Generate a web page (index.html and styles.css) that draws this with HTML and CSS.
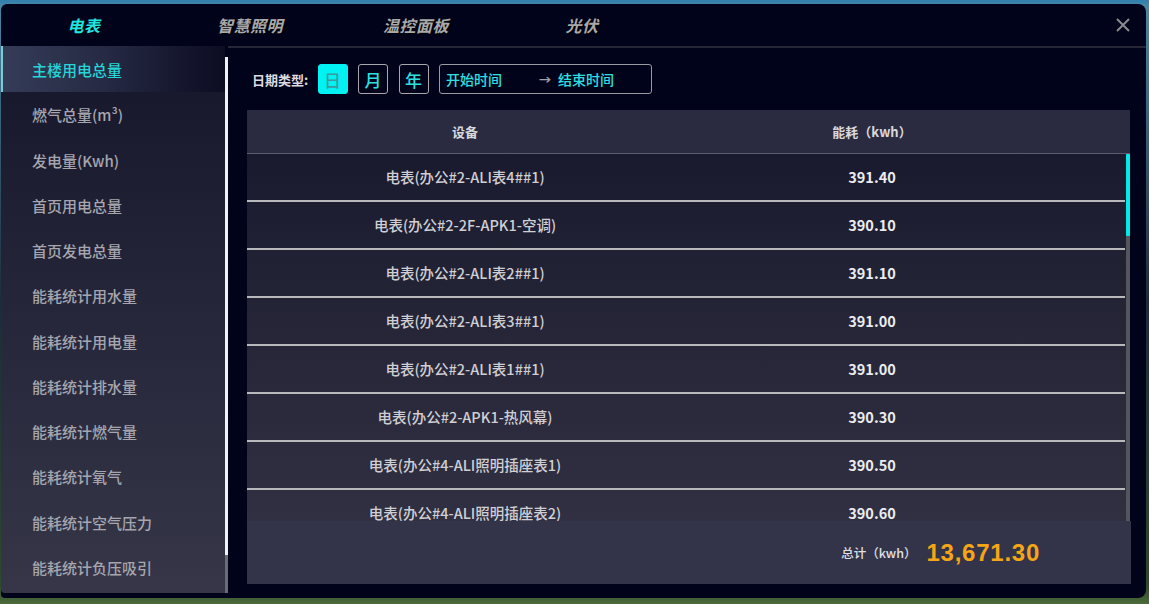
FILE: index.html
```html
<!DOCTYPE html>
<html lang="zh-CN">
<head>
<meta charset="utf-8">
<title>能耗统计</title>
<link rel="stylesheet" href="styles.css">
</head>
<body>
<div class="page">
  <div class="modal">
    <div class="header">
      <div class="tab active">电表</div>
      <div class="tab">智慧照明</div>
      <div class="tab">温控面板</div>
      <div class="tab">光伏</div>
      <div class="close">
        <svg width="14" height="14" viewBox="0 0 14 14"><path d="M1 1 L13 13 M13 1 L1 13" stroke="#8a8a8e" stroke-width="2" fill="none"/></svg>
      </div>
    </div>
    <div class="body">
      <div class="side">
        <div class="menu">
          <div class="item active">主楼用电总量</div>
          <div class="item">燃气总量(m³)</div>
          <div class="item">发电量(Kwh)</div>
          <div class="item">首页用电总量</div>
          <div class="item">首页发电总量</div>
          <div class="item">能耗统计用水量</div>
          <div class="item">能耗统计用电量</div>
          <div class="item">能耗统计排水量</div>
          <div class="item">能耗统计燃气量</div>
          <div class="item">能耗统计氧气</div>
          <div class="item">能耗统计空气压力</div>
          <div class="item">能耗统计负压吸引</div>
        </div>
        <div class="side-scroll"><div class="side-thumb"></div></div>
      </div>
      <div class="main">
        <div class="filters">
          <span class="flabel">日期类型:</span>
          <span class="dbtn on">日</span>
          <span class="dbtn">月</span>
          <span class="dbtn">年</span>
          <div class="range">
            <span class="rtext">开始时间</span>
            <span class="arrow">→</span>
            <span class="rtext">结束时间</span>
          </div>
        </div>
        <div class="table">
          <div class="thead">
            <div class="cell">设备</div>
            <div class="cell">能耗（kwh）</div>
          </div>
          <div class="tbody">
            <div class="rows">
              <div class="row"><div class="cell name">电表(办公#2-ALI表4##1)</div><div class="cell val">391.40</div></div>
              <div class="row"><div class="cell name">电表(办公#2-2F-APK1-空调)</div><div class="cell val">390.10</div></div>
              <div class="row"><div class="cell name">电表(办公#2-ALI表2##1)</div><div class="cell val">391.10</div></div>
              <div class="row"><div class="cell name">电表(办公#2-ALI表3##1)</div><div class="cell val">391.00</div></div>
              <div class="row"><div class="cell name">电表(办公#2-ALI表1##1)</div><div class="cell val">391.00</div></div>
              <div class="row"><div class="cell name">电表(办公#2-APK1-热风幕)</div><div class="cell val">390.30</div></div>
              <div class="row"><div class="cell name">电表(办公#4-ALI照明插座表1)</div><div class="cell val">390.50</div></div>
              <div class="row"><div class="cell name">电表(办公#4-ALI照明插座表2)</div><div class="cell val">390.60</div></div>
            </div>
            <div class="tscroll"><div class="tthumb"></div></div>
          </div>
          <div class="tfoot">
            <span class="tlabel">总计（kwh）</span>
            <span class="total">13,671.30</span>
          </div>
        </div>
      </div>
    </div>
  </div>
</div>
</body>
</html>
```
FILE: styles.css
```css
* { box-sizing: border-box; }
html, body { margin: 0; padding: 0; }
body {
  width: 1149px;
  height: 604px;
  overflow: hidden;
  font-family: "Noto Sans CJK SC", "Noto Sans", sans-serif;
  background: linear-gradient(to bottom, #2f7fae 0px, #4a86a6 6px, #1d2c3a 50%, #2d4a2c 97%, #4c6a3a 100%);
}
.page {
  width: 1149px;
  height: 604px;
  padding: 4px 3px 6px 1px;
}
.modal {
  width: 100%;
  height: 100%;
  background: #01031a;
  border-radius: 6px 8px 8px 4px;
  display: flex;
  flex-direction: column;
  overflow: hidden;
}
.header {
  height: 42px;
  flex: none;
  display: flex;
  align-items: center;
}
.tab {
  width: 166px;
  text-align: center;
  font-size: 16px;
  font-weight: 700;
  font-style: italic;
  letter-spacing: 0.5px;
  color: #a9a9ab;
  text-shadow: 1px 1px 1px #000;
}
.tab.active {
  color: #1fe6e2;
}
.close {
  margin-left: auto;
  margin-right: 16px;
  width: 14px;
  height: 14px;
  display: flex;
}
.body {
  flex: 1;
  display: flex;
  min-height: 0;
}
.side {
  width: 227px;
  flex: none;
  display: flex;
  height: 547px;
}
.menu {
  width: 224px;
  height: 547px;
  padding-top: 1px;
  background: linear-gradient(to bottom, #16162a 0%, #25253a 45%, #363648 100%);
  border-bottom-left-radius: 4px;
}
.item {
  height: 45.25px;
  display: flex;
  align-items: center;
  padding-left: 31px;
  font-size: 15px;
  font-weight: 500;
  color: #a6a6ae;
}
.item.active {
  color: #25d6d6;
  background: linear-gradient(to right, #353c58 0%, #262a44 45%, #0c0c22 100%);
  border-left: 2px solid #7fc9d4;
  padding-left: 29px;
  margin-top: -1px;
  height: 46.25px;
}
.side-scroll {
  width: 3px;
  margin-top: 11px;
  height: 536px;
  background: #6b6b72;
}
.side-thumb {
  height: 498px;
  background: #f2f2f2;
}
.main {
  flex: 1;
  border-top: 2px solid #262636;
  padding: 16px 15px 0 19px;
  display: flex;
  flex-direction: column;
}
.filters {
  display: flex;
  align-items: center;
  height: 30px;
  gap: 10.5px;
  padding-left: 5px;
}
.flabel {
  font-size: 13px;
  font-weight: 700;
  color: #dcdce0;
  width: 55px;
  white-space: nowrap;
}
.dbtn {
  width: 30px;
  height: 30px;
  border: 1.5px solid #a8a8ac;
  border-radius: 3px;
  display: flex;
  align-items: center;
  justify-content: center;
  font-size: 17px;
  font-weight: 500;
  color: #2ee0e0;
}
.dbtn.on {
  background: #00f2f2;
  border-color: #00f2f2;
  color: #3a9aa0;
}
.range {
  width: 213px;
  height: 30px;
  border: 1.5px solid #9a9aa0;
  border-radius: 3px;
  display: flex;
  align-items: center;
  padding-left: 6px;
}
.rtext {
  font-size: 14px;
  font-weight: 500;
  color: #2ee0e0;
}
.arrow {
  color: #a0a0a6;
  font-size: 12px;
  font-weight: 700;
  margin: 0 7px 0 37px;
}
.table {
  margin-top: 16px;
  width: 884px;
  display: flex;
  flex-direction: column;
}
.thead {
  width: 883px;
  height: 44px;
  background: #2a2b40;
  border-bottom: 1px solid #5c5c6c;
  display: grid;
  grid-template-columns: 436px 378px 1fr;
  align-items: center;
}
.cell {
  text-align: center;
}
.thead .cell {
  font-size: 13px;
  font-weight: 700;
  color: #d8d8dc;
}
.tbody {
  height: 367px;
  display: flex;
  overflow: hidden;
  background: linear-gradient(to bottom, #1a1a2f 0%, #262638 50%, #303042 100%);
  width: 883px;
}
.rows {
  width: 878px;
  flex: none;
}
.row {
  height: 48px;
  flex: none;
  border-bottom: 2px solid #b9b9bc;
  display: grid;
  grid-template-columns: 436px 378px 1fr;
  align-items: center;
  padding-bottom: 2px;
}
.name {
  font-size: 14.5px;
  font-weight: 500;
  color: #cfcfd4;
}
.val {
  font-size: 14.5px;
  font-weight: 700;
  color: #ececee;
}
.tscroll {
  width: 4px;
  margin-left: 1px;
  height: 100%;
  background: #55555c;
}
.tthumb {
  height: 82px;
  background: #00eaea;
  border-radius: 1px;
}
.tfoot {
  height: 63px;
  background: #33344a;
  display: flex;
  align-items: center;
  justify-content: flex-end;
  padding-right: 91px;
}
.tlabel {
  font-size: 12.5px;
  font-weight: 500;
  color: #e0e0e4;
  margin-right: 10px;
}
.total {
  font-family: "Liberation Sans", sans-serif;
  font-size: 24px;
  font-weight: 700;
  letter-spacing: 0.75px;
  color: #f5a515;
}
```
